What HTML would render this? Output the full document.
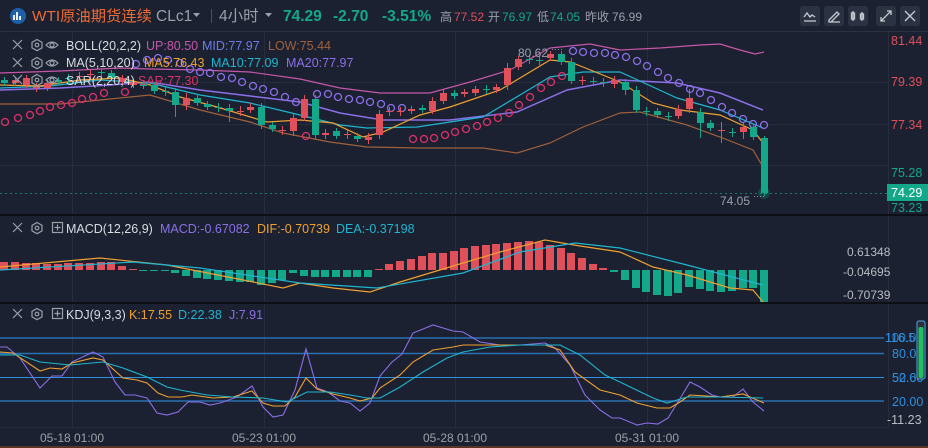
<!DOCTYPE html>
<html><head><meta charset="utf-8"><style>
*{margin:0;padding:0;box-sizing:border-box}
body{width:928px;height:448px;background:#1b2130;overflow:hidden;font-family:"Liberation Sans","Noto Sans CJK SC",sans-serif;position:relative}
.a{position:absolute;white-space:nowrap}
</style></head><body>
<svg class="a" style="left:0;top:0" width="928" height="448" viewBox="0 0 928 448">
<defs><style>text{font-family:"Liberation Sans","Noto Sans CJK SC",sans-serif}</style></defs>
<line x1="0" y1="31.5" x2="928" y2="31.5" stroke="#2a3140"/>
<g stroke="#262d3c" stroke-width="1">
<line x1="0" y1="82.5" x2="888" y2="82.5"/><line x1="0" y1="124.5" x2="888" y2="124.5"/><line x1="0" y1="165.5" x2="888" y2="165.5"/>
<line x1="72.5" y1="32" x2="72.5" y2="427"/><line x1="264.5" y1="32" x2="264.5" y2="427"/><line x1="455.5" y1="32" x2="455.5" y2="427"/><line x1="647.5" y1="32" x2="647.5" y2="427"/>
<line x1="0" y1="427.5" x2="888" y2="427.5"/>
<line x1="888.5" y1="32" x2="888.5" y2="427"/>
</g>
<line x1="0" y1="193.5" x2="888" y2="193.5" stroke="#1c7a6a" stroke-dasharray="2,3"/>
<rect x="0" y="214" width="928" height="2" fill="#0c0f16"/>
<rect x="0" y="302" width="928" height="2" fill="#0c0f16"/>
<rect x="0" y="446" width="928" height="2" fill="#5a3424"/>

<g fill="none" stroke-width="1.2">
<polyline stroke="#c657a8" points="0,73 60,71 120,68 150,69 200,70 250,72 300,79 340,88 380,93 430,93 470,82 510,70 550,48 590,44 620,50 660,48 700,45 720,44 740,50 755,54 764,52"/>
<polyline stroke="#8b6fe8" stroke-width="1.5" points="0,90 60,88 110,85 150,82 200,90 250,96 300,102 340,113 383,120 450,120 517,112 567,90 620,80 677,83 720,93 763,110"/>
<polyline stroke="#a0603c" points="0,104 60,104 100,100 130,97 150,95 200,110 250,122 283,133 330,142 367,147 420,148 483,148 517,153 550,143 583,127 620,113 640,112 687,125 720,137 753,150 763,167"/>
<polyline stroke="#1fb5d0" points="0,88 50,86 100,80 150,83 200,95 250,103 300,115 340,125 367,128 417,127 483,117 520,95 550,77 583,72 620,72 653,87 677,98 720,110 763,128"/>
<polyline stroke="#f0a030" points="0,85 40,86 80,80 120,78 150,85 180,97 217,107 267,122 300,120 333,123 363,137 383,132 420,115 450,107 500,90 530,72 550,60 570,62 583,67 620,82 653,103 680,110 720,115 753,130 763,143"/>
</g>
<g fill="none" stroke="#e0306a" stroke-width="1.3">
<circle cx="5" cy="122" r="3.5"/><circle cx="18" cy="118" r="3.5"/><circle cx="30" cy="115" r="3.5"/><circle cx="40" cy="111" r="3.5"/><circle cx="50" cy="107" r="3.5"/><circle cx="61" cy="105" r="3.5"/><circle cx="72" cy="103" r="3.5"/><circle cx="82" cy="99" r="3.5"/><circle cx="93" cy="97" r="3.5"/><circle cx="104" cy="93" r="3.5"/><circle cx="125" cy="92" r="3.5"/>
<circle cx="306" cy="136" r="3.5"/>
<circle cx="413" cy="139" r="3.5"/><circle cx="424" cy="139" r="3.5"/><circle cx="434" cy="138" r="3.5"/><circle cx="445" cy="135" r="3.5"/><circle cx="455" cy="132" r="3.5"/><circle cx="466" cy="129" r="3.5"/><circle cx="477" cy="126" r="3.5"/><circle cx="487" cy="122" r="3.5"/><circle cx="498" cy="118" r="3.5"/><circle cx="509" cy="113" r="3.5"/><circle cx="519" cy="105" r="3.5"/><circle cx="530" cy="97" r="3.5"/><circle cx="541" cy="88" r="3.5"/><circle cx="551" cy="82" r="3.5"/><circle cx="562" cy="76" r="3.5"/>
</g>
<g fill="none" stroke="#8b6fe8" stroke-width="1.3">
<circle cx="136" cy="64" r="3.5"/><circle cx="147" cy="60" r="3.5"/><circle cx="158" cy="58" r="3.5"/><circle cx="168" cy="60" r="3.5"/><circle cx="180" cy="63" r="3.5"/><circle cx="190" cy="69" r="3.5"/><circle cx="200" cy="72" r="3.5"/><circle cx="210" cy="73" r="3.5"/><circle cx="221" cy="77" r="3.5"/><circle cx="232" cy="78" r="3.5"/><circle cx="242" cy="82" r="3.5"/><circle cx="253" cy="86" r="3.5"/><circle cx="263" cy="89" r="3.5"/><circle cx="274" cy="92" r="3.5"/><circle cx="285" cy="97" r="3.5"/><circle cx="296" cy="102" r="3.5"/>
<circle cx="317" cy="94" r="3.5"/><circle cx="328" cy="94" r="3.5"/><circle cx="338" cy="97" r="3.5"/><circle cx="349" cy="99" r="3.5"/><circle cx="360" cy="100" r="3.5"/><circle cx="370" cy="102" r="3.5"/><circle cx="381" cy="104" r="3.5"/><circle cx="391" cy="108" r="3.5"/><circle cx="402" cy="108" r="3.5"/>
<circle cx="573" cy="51" r="3.5"/><circle cx="583" cy="52" r="3.5"/><circle cx="594" cy="53" r="3.5"/><circle cx="605" cy="53" r="3.5"/><circle cx="615" cy="55" r="3.5"/><circle cx="626" cy="57" r="3.5"/><circle cx="637" cy="61" r="3.5"/><circle cx="647" cy="66" r="3.5"/><circle cx="658" cy="72" r="3.5"/><circle cx="668" cy="78" r="3.5"/><circle cx="679" cy="83" r="3.5"/><circle cx="690" cy="89" r="3.5"/><circle cx="700" cy="93" r="3.5"/><circle cx="711" cy="100" r="3.5"/><circle cx="722" cy="107" r="3.5"/><circle cx="732" cy="113" r="3.5"/><circle cx="743" cy="119" r="3.5"/><circle cx="753" cy="124" r="3.5"/><circle cx="764" cy="125" r="3.5"/>
</g>
<g fill="#e0505a" stroke="#e0505a">
<path fill="none" d="M15.5 77V86M26.5 75V88M47.5 80V91M122.5 75V85M133.5 79V88M186.5 93V110M250.5 103V113M293.5 114V136M304.5 95V121M325.5 129V139M368.5 133V144M379.5 110V139M411.5 106V114M432.5 97V114M443.5 89V104M464.5 89V97M475.5 86V96M496.5 84V93M507.5 63V90M518.5 56V70M550.5 51V61M614.5 76V88M678.5 105V119M689.5 89V113M743.5 123V139"/>
<g stroke="none">
<rect x="12" y="80" width="7" height="3"/><rect x="23" y="78" width="7" height="7"/><rect x="44" y="83" width="7" height="5"/><rect x="119" y="78" width="7" height="4"/><rect x="130" y="82" width="7" height="3"/><rect x="183" y="98" width="7" height="7"/><rect x="247" y="107" width="7" height="3"/><rect x="290" y="118" width="7" height="13"/><rect x="301" y="99" width="7" height="19"/><rect x="322" y="133" width="7" height="2"/><rect x="365" y="137" width="7" height="3"/><rect x="376" y="114" width="7" height="21"/><rect x="408" y="109" width="7" height="2"/><rect x="429" y="101" width="7" height="10"/><rect x="440" y="93" width="7" height="8"/><rect x="461" y="92" width="7" height="2"/><rect x="472" y="89" width="7" height="4"/><rect x="493" y="87" width="7" height="3"/><rect x="504" y="68" width="7" height="17"/><rect x="515" y="59" width="7" height="8"/><rect x="547" y="54" width="7" height="4"/><rect x="611" y="80" width="7" height="4"/><rect x="675" y="109" width="7" height="7"/><rect x="686" y="98" width="7" height="11"/><rect x="740" y="127" width="7" height="5"/>
</g>
<path fill="none" d="M33 87.5h7M36.5 83V92M76 76.5h7M79.5 72V81M87 74.5h7M90.5 70V79M237 111.5h7M240.5 106V116M279 130.5h7M282.5 126V135M344 134.5h7M347.5 130V139M386 111.5h7M389.5 107V116M397 111.5h7M400.5 107V116M579 80.5h7M582.5 76V85M718 130.5h7M721.5 122V143"/>
</g>
<g fill="#14a88b" stroke="#14a88b">
<path fill="none" d="M4.5 77V86M58.5 77V85M111.5 70V81M143.5 80V89M154.5 82V94M175.5 88V117M197.5 94V106M207.5 101V110M229.5 104V122M261.5 103V129M272.5 122V132M315.5 95V139M336.5 128V139M357.5 133V142M422.5 105V113M454.5 90V99M561.5 51V65M571.5 58V84M625.5 79V95M636.5 86V113M657.5 108V118M700.5 108V138M710.5 120V131M753.5 124V140M764.5 136V196"/>
<g stroke="none">
<rect x="1" y="80" width="7" height="3"/><rect x="55" y="80" width="7" height="2"/><rect x="108" y="73" width="7" height="5"/><rect x="140" y="83" width="7" height="3"/><rect x="151" y="85" width="7" height="6"/><rect x="172" y="92" width="7" height="13"/><rect x="194" y="98" width="7" height="5"/><rect x="204" y="104" width="7" height="3"/><rect x="226" y="108" width="7" height="3"/><rect x="258" y="107" width="7" height="18"/><rect x="269" y="125" width="7" height="4"/><rect x="312" y="99" width="7" height="36"/><rect x="333" y="131" width="7" height="5"/><rect x="354" y="136" width="7" height="3"/><rect x="419" y="108" width="7" height="2"/><rect x="451" y="93" width="7" height="3"/><rect x="558" y="54" width="7" height="8"/><rect x="568" y="62" width="7" height="19"/><rect x="622" y="82" width="7" height="8"/><rect x="633" y="90" width="7" height="20"/><rect x="654" y="111" width="7" height="4"/><rect x="697" y="112" width="7" height="11"/><rect x="707" y="123" width="7" height="5"/><rect x="750" y="127" width="7" height="10"/><rect x="761" y="138" width="7" height="55"/>
</g>
<path fill="none" d="M65 78.5h7M68.5 74V83M98 72.5h7M101.5 68V77M162 91.5h7M165.5 87V96M215 107.5h7M218.5 103V112M483 89.5h7M486.5 85V94M526 59.5h7M529.5 55V64M536 60.5h7M539.5 56V65M590 81.5h7M593.5 77V86M600 82.5h7M603.5 78V87M643 111.5h7M646.5 107V116M665 116.5h7M668.5 112V121M729 132.5h7M732.5 128V137"/>
</g>
<circle cx="764" cy="193" r="6" fill="#14a88b" opacity="0.25"/>
<text x="720" y="205" font-size="12" fill="#9aa0aa">74.05</text><text x="753" y="199" font-size="9" fill="#9aa0aa">····</text>
<text x="518" y="57" font-size="12" fill="#9aa0aa">80.62</text><text x="551" y="52" font-size="9" fill="#9aa0aa">····</text>

<g font-size="12.5">
<text x="891" y="45" fill="#e0505a">81.44</text>
<text x="891" y="86" fill="#e0505a">79.39</text>
<text x="891" y="129" fill="#e0505a">77.34</text>
<text x="891" y="177" fill="#14a88b">75.28</text>
<text x="891" y="212" fill="#14a88b">73.23</text>
</g>
<rect x="887" y="184" width="41" height="17" fill="#14a88b"/>
<text x="891" y="197" font-size="12.5" fill="#ffffff">74.29</text>

<g fill="#e0505a">
<rect x="0" y="262" width="8" height="8"/><rect x="11" y="262" width="8" height="8"/><rect x="22" y="263" width="8" height="7"/><rect x="32" y="263" width="8" height="7"/><rect x="43" y="264" width="8" height="6"/><rect x="54" y="264" width="8" height="6"/><rect x="64" y="263" width="8" height="7"/><rect x="75" y="263" width="8" height="7"/><rect x="86" y="263" width="8" height="7"/><rect x="97" y="262" width="8" height="8"/><rect x="107" y="262" width="8" height="8"/><rect x="118" y="266" width="8" height="4"/><rect x="129" y="269" width="8" height="1"/>
<rect x="375" y="269" width="8" height="1"/><rect x="385" y="264" width="8" height="6"/><rect x="396" y="261" width="8" height="9"/><rect x="407" y="259" width="8" height="11"/><rect x="418" y="256" width="8" height="14"/><rect x="428" y="253" width="8" height="17"/><rect x="439" y="253" width="8" height="17"/><rect x="450" y="251" width="8" height="19"/><rect x="460" y="248" width="8" height="22"/><rect x="471" y="246" width="8" height="24"/><rect x="482" y="245" width="8" height="25"/><rect x="492" y="244" width="8" height="26"/><rect x="503" y="243" width="8" height="27"/><rect x="514" y="242" width="8" height="28"/><rect x="525" y="241" width="8" height="29"/><rect x="535" y="242" width="8" height="28"/><rect x="546" y="245" width="8" height="25"/><rect x="557" y="248" width="8" height="22"/><rect x="567" y="253" width="8" height="17"/><rect x="578" y="258" width="8" height="12"/><rect x="589" y="264" width="8" height="6"/><rect x="599" y="268" width="8" height="2"/>
</g>
<g fill="#14a88b">
<rect x="139" y="270" width="8" height="1"/><rect x="150" y="270" width="8" height="1"/><rect x="161" y="270" width="8" height="1"/><rect x="171" y="270" width="8" height="3"/><rect x="182" y="270" width="8" height="6"/><rect x="193" y="270" width="8" height="8"/><rect x="203" y="270" width="8" height="9"/><rect x="214" y="270" width="8" height="10"/><rect x="225" y="270" width="8" height="11"/><rect x="236" y="270" width="8" height="12"/><rect x="246" y="270" width="8" height="12"/><rect x="257" y="270" width="8" height="15"/><rect x="268" y="270" width="8" height="13"/><rect x="278" y="270" width="8" height="10"/><rect x="289" y="270" width="8" height="3"/><rect x="300" y="270" width="8" height="6"/><rect x="311" y="270" width="8" height="7"/><rect x="321" y="270" width="8" height="7"/><rect x="332" y="270" width="8" height="7"/><rect x="343" y="270" width="8" height="7"/><rect x="353" y="270" width="8" height="7"/><rect x="364" y="270" width="8" height="7"/>
<rect x="610" y="270" width="8" height="2"/><rect x="621" y="270" width="8" height="10"/><rect x="632" y="270" width="8" height="18"/><rect x="642" y="270" width="8" height="22"/><rect x="653" y="270" width="8" height="25"/><rect x="664" y="270" width="8" height="26"/><rect x="674" y="270" width="8" height="23"/><rect x="685" y="270" width="8" height="17"/><rect x="696" y="270" width="8" height="19"/><rect x="706" y="270" width="8" height="21"/><rect x="717" y="270" width="8" height="22"/><rect x="728" y="270" width="8" height="21"/><rect x="739" y="270" width="8" height="18"/><rect x="749" y="270" width="8" height="18"/><rect x="760" y="270" width="8" height="32"/>
</g>
<g fill="none" stroke-width="1.2">
<polyline stroke="#f0a030" points="0,267 100,258 167,265 233,278 283,288 300,283 333,288 370,292 400,282 463,263 500,252 545,240 580,246 620,252 653,267 687,275 730,288 753,290 763,302"/>
<polyline stroke="#1fb5d0" points="0,270 133,262 200,268 300,283 377,288 463,273 520,252 575,243 620,248 687,265 763,285"/>
</g>
<g font-size="12" fill="#b8bcc6">
<text x="847" y="256">0.61348</text>
<text x="843" y="276">-0.04695</text>
<text x="843" y="299">-0.70739</text>
</g>

<g stroke-width="1.5">
<line x1="0" y1="338" x2="884" y2="338" stroke="#2a6fb0"/>
<line x1="0" y1="353.5" x2="884" y2="353.5" stroke="#2a6fb0"/>
<line x1="0" y1="377.5" x2="884" y2="377.5" stroke="#2f90e0" stroke-width="1"/>
<line x1="0" y1="401" x2="884" y2="401" stroke="#2a6fb0"/>
</g>
<g fill="none" stroke-width="1.1">
<polyline stroke="#8b6fe8" points="0,347 7,347 20,358 40,388 52,376 62,376 72,362 93,352 103,357 115,382 125,395 135,395 147,398 157,413 167,415 178,412 188,402 200,402 210,405 220,403 237,397 252,386 263,407 273,417 283,415 295,390 306,349 317,388 328,392 340,401 350,403 360,411 370,403 380,376 392,362 402,354 413,333 433,325 453,331 463,332 480,342 500,345 520,345 545,343 555,348 570,365 585,395 600,410 612,418 620,418 637,425 647,423 658,424 668,418 678,402 690,382 700,387 712,395 720,397 733,397 743,389 753,402 764,411"/>
<polyline stroke="#f0a030" points="0,352 13,353 40,371 50,368 62,369 72,363 93,358 103,360 123,378 137,380 147,383 158,393 168,397 182,397 192,395 213,398 233,397 252,391 263,403 273,406 285,406 295,397 306,378 317,389 333,394 350,398 360,401 372,398 380,388 400,375 413,362 433,350 453,347 463,345 490,345 545,345 560,350 575,372 600,390 620,395 637,403 657,408 670,408 680,402 690,395 707,396 720,397 743,394 764,403"/>
<polyline stroke="#1fb5d0" points="0,355 20,355 40,362 70,365 103,362 123,368 147,377 167,387 180,390 207,395 233,397 263,398 287,402 307,392 330,392 350,395 367,398 380,398 400,387 423,372 447,358 463,352 490,347 520,345 560,345 580,355 605,375 620,382 653,398 667,403 687,397 720,397 763,398"/>
</g>
<g font-size="12.5" fill="#2f8fe0">
<text x="885" y="342">116.5</text>
<text x="885" y="342" opacity="0.8">100.0</text>
<text x="892" y="358">80.00</text>
<text x="892" y="382">52.60</text>
<text x="892" y="382" opacity="0.8">50.00</text>
<text x="892" y="406">20.00</text>
<text x="887" y="424" fill="#b8bcc6">-11.23</text>
</g>
<rect x="917" y="321" width="8" height="58" rx="2" fill="#2a2f3a" stroke="#4aa8e8"/>
<rect x="918.5" y="327" width="5" height="51" rx="2" fill="#22c060"/>

<g font-size="12" fill="#9aa0aa" text-anchor="middle">
<text x="72" y="442">05-18 01:00</text>
<text x="264" y="442">05-23 01:00</text>
<text x="455" y="442">05-28 01:00</text>
<text x="647" y="442">05-31 01:00</text>
</g>

<g stroke="#9aa0aa" stroke-width="1.2" fill="none">
<path d="M13 40l9 9M22 40l-9 9M13 58l9 9M22 58l-9 9M13 75l9 9M22 75l-9 9M13 223l9 9M22 223l-9 9M13 309l9 9M22 309l-9 9"/>
<path d="M37 39.5l5 2.8v5.6l-5 2.8-5-2.8v-5.6z M37 57.5l5 2.8v5.6l-5 2.8-5-2.8v-5.6z M37 74.5l5 2.8v5.6l-5 2.8-5-2.8v-5.6z M37 222.5l5 2.8v5.6l-5 2.8-5-2.8v-5.6z M37 308.5l5 2.8v5.6l-5 2.8-5-2.8v-5.6z"/>
<circle cx="37" cy="45" r="1.8"/><circle cx="37" cy="63" r="1.8"/><circle cx="37" cy="80" r="1.8"/><circle cx="37" cy="228" r="1.8"/><circle cx="37" cy="314" r="1.8"/>
<path d="M46 45q6-6 12 0q-6 6-12 0zM46 63q6-6 12 0q-6 6-12 0zM46 80q6-6 12 0q-6 6-12 0z"/>
<circle cx="52" cy="45" r="2"/><circle cx="52" cy="63" r="2"/><circle cx="52" cy="80" r="2"/>
<rect x="52.5" y="222.5" width="10" height="10"/><path d="M57.5 224.5v6M54.5 227.5h6"/>
<rect x="52.5" y="308.5" width="10" height="10"/><path d="M57.5 310.5v6M54.5 313.5h6"/>
</g>
<g font-size="12.5">
<text x="66" y="50" fill="#d8dbe2">BOLL(20,2,2)</text><text x="146" y="50" fill="#c657a8">UP:80.50</text><text x="202" y="50" fill="#6f7ce8">MID:77.97</text><text x="268" y="50" fill="#a0603c">LOW:75.44</text>
<text x="66" y="67" fill="#d8dbe2">MA(5,10,20)</text><text x="144" y="67" fill="#f0a030">MA5:76.43</text><text x="211" y="67" fill="#1fb5d0">MA10:77.09</text><text x="286" y="67" fill="#8b6fe8">MA20:77.97</text>
<text x="66" y="85" fill="#d8dbe2">SAR(2,20,4)</text><text x="138" y="85" fill="#e0306a">SAR:77.30</text>
<text x="66" y="233" fill="#d8dbe2">MACD(12,26,9)</text><text x="160" y="233" fill="#8b6fe8">MACD:-0.67082</text><text x="257" y="233" fill="#f0a030">DIF:-0.70739</text><text x="336" y="233" fill="#1fb5d0">DEA:-0.37198</text>
<text x="66" y="319" fill="#d8dbe2">KDJ(9,3,3)</text><text x="129" y="319" fill="#f0a030">K:17.55</text><text x="178" y="319" fill="#1fb5d0">D:22.38</text><text x="229" y="319" fill="#8b6fe8">J:7.91</text>
</g>

<circle cx="18" cy="16" r="8" fill="#1e5fa8"/>
<path d="M14 20v-5M17 20v-8M20 20v-4" stroke="#fff" stroke-width="1.8"/>
<text x="32" y="21" font-size="15" fill="#f06a32" textLength="120" lengthAdjust="spacingAndGlyphs">WTI原油期货连续</text>
<text x="156" y="21" font-size="15.5" fill="#9aa0aa">CLc1</text>
<path d="M193 13l3.5 4 3.5-4z" fill="#9aa0aa"/>
<line x1="211.5" y1="9" x2="211.5" y2="23" stroke="#4a505c"/>
<text x="219" y="21" font-size="15.5" fill="#9aa0aa">4小时</text>
<path d="M265 13l3.5 4 3.5-4z" fill="#9aa0aa"/>
<g font-size="15.5" font-weight="bold" fill="#14a88b">
<text x="283" y="21">74.29</text><text x="333" y="21">-2.70</text><text x="382" y="21">-3.51%</text>
</g>
<g font-size="12">
<text x="440" y="21" fill="#9aa0aa">高</text><text x="454" y="21" fill="#e0505a">77.52</text>
<text x="488" y="21" fill="#9aa0aa">开</text><text x="502" y="21" fill="#14a88b">76.97</text>
<text x="537" y="21" fill="#9aa0aa">低</text><text x="550" y="21" fill="#14a88b">74.05</text>
<text x="585" y="21" fill="#9aa0aa">昨收</text><text x="612" y="21" fill="#9aa0aa">76.99</text>
</g>
<g fill="#2b3242">
<rect x="800" y="6" width="20" height="20" rx="3"/><rect x="824" y="6" width="20" height="20" rx="3"/><rect x="848" y="6" width="20" height="20" rx="3"/><rect x="876" y="6" width="20" height="20" rx="3"/><rect x="900" y="6" width="20" height="20" rx="3"/>
</g>
<g stroke="#c8ccd4" stroke-width="1.3" fill="none">
<path d="M804 17l3-4 3 4 2-2 3 2M804 21h12"/>
<path d="M829 20l8-8 2 2-8 8h-2zM829 22h11" />
<path d="M853 11v10M853 13h-1.5v6h3v-6zM862 12v9M860.5 14h3v5h-3z"/>
<path d="M881 21l10-10M887 11h4v4M881 17v4h4"/>
<path d="M905 11l10 10M915 11l-10 10"/>
</g>
</svg>
</body></html>
